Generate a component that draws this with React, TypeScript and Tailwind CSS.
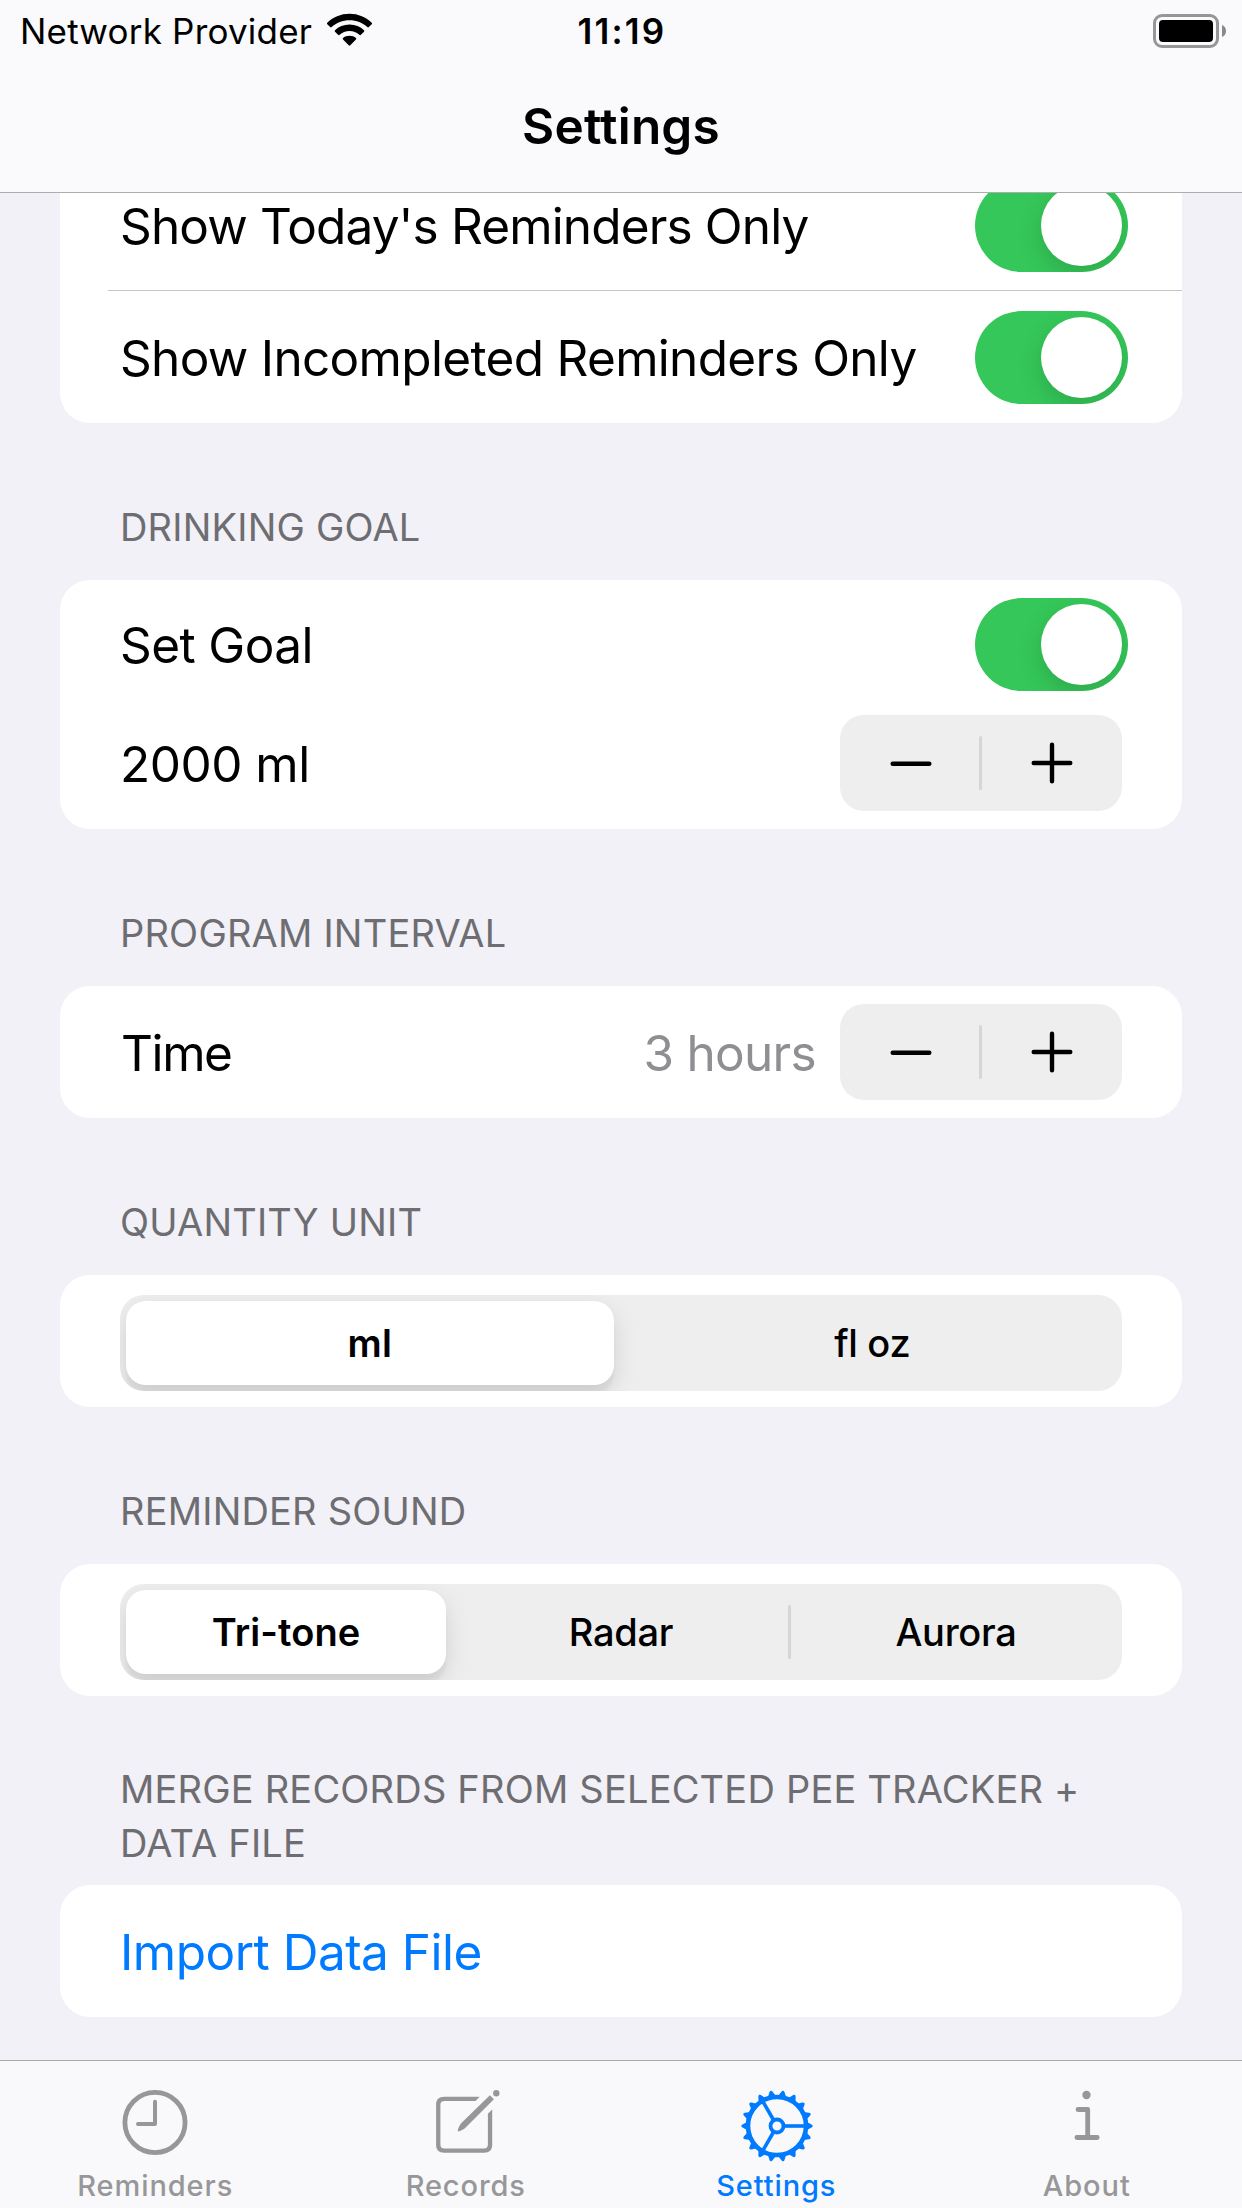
import React, { useState } from 'react';

interface ToggleProps {
  checked: boolean;
  onChange: (checked: boolean) => void;
}

const Toggle: React.FC<ToggleProps> = ({ checked, onChange }) => (
  <button
    type="button"
    role="switch"
    aria-checked={checked}
    onClick={() => onChange(!checked)}
    className={`flex h-[93px] w-[153px] shrink-0 items-center overflow-hidden rounded-full px-1.5 ${
      checked ? 'justify-end bg-[#35c759]' : 'justify-start bg-[#e9e9ea]'
    }`}
  >
    <span className="size-[81px] rounded-full bg-white shadow-[0_9px_24px_rgba(0,0,0,0.15)]" />
  </button>
);

interface StepperProps {
  onStep: (direction: number) => void;
}

const Stepper: React.FC<StepperProps> = ({ onStep }) => (
  <div className="flex h-24 w-[282px] shrink-0 items-center rounded-[24px] bg-[#eeeeee]">
    <button type="button" onClick={() => onStep(-1)} className="flex h-full w-[139px] items-center justify-center pl-0.5">
      <svg width="42" height="42" viewBox="0 0 42 42" fill="none" stroke="#000" strokeWidth="4.4" strokeLinecap="round">
        <path d="M2.7 21.7H39.3" />
      </svg>
    </button>
    <span className="h-[54px] w-[3px] rounded-full bg-[#d6d6d6]" />
    <button type="button" onClick={() => onStep(1)} className="flex h-full flex-1 items-center justify-center">
      <svg width="42" height="42" viewBox="0 0 42 42" fill="none" stroke="#000" strokeWidth="4.4" strokeLinecap="round">
        <path d="M2.7 21H39.3M21 2.7V39.3" />
      </svg>
    </button>
  </div>
);

interface SegmentedProps {
  options: string[];
  value: string;
  onChange: (value: string) => void;
}

const Segmented: React.FC<SegmentedProps> = ({ options, value, onChange }) => {
  const selected = options.indexOf(value);
  return (
    <div className="flex h-24 w-full items-center overflow-hidden rounded-[24px] bg-[#eeeeee]">
      {options.map((option, i) => (
        <React.Fragment key={option}>
          {i > 0 && (
            <span
              className={`-ml-0.5 -mr-px h-[54px] w-[3px] shrink-0 rounded-full ${
                i === selected || i === selected + 1 ? 'bg-transparent' : 'bg-[#d6d6d6]'
              }`}
            />
          )}
          <div className="flex min-w-0 flex-1 basis-0 pl-1.5 pr-[9px] last:pr-1.5">
            <button
              type="button"
              onClick={() => onChange(option)}
              className={`h-[84px] flex-1 text-[38px] ${
                i === selected
                  ? 'rounded-[20px] bg-white font-semibold tracking-[0.1px] shadow-[0_9px_24px_rgba(0,0,0,0.12),0_9px_3px_rgba(0,0,0,0.04)]'
                  : 'font-medium tracking-[-0.3px]'
              }`}
            >
              {option}
            </button>
          </div>
        </React.Fragment>
      ))}
    </div>
  );
};

const SectionHeader: React.FC<{ children: React.ReactNode; tall?: boolean }> = ({ children, tall }) => (
  <h2
    className={`flex items-end px-[60px] text-[38px] leading-[54px] tracking-[0.2px] text-[#6d6d72] ${
      tall ? 'h-[189px] pb-[15px]' : 'h-[157px] pb-[26px]'
    }`}
  >
    {children}
  </h2>
);

const Card: React.FC<{ children: React.ReactNode; className?: string }> = ({ children, className = '' }) => (
  <div className={`overflow-hidden rounded-[30px] bg-white ${className}`}>{children}</div>
);

const WifiIcon = () => (
  <svg className="mb-0.5" width="47" height="34" viewBox="0 0 48 34" fill="#000">
    <path d="M24 0.3C33 0.3 41 3.8 46.7 9.5C47.2 10 47.2 10.6 46.7 11.1L43.8 14C43.3 14.5 42.7 14.5 42.2 14C37.5 9.6 31 7 24 7C17 7 10.5 9.6 5.8 14C5.3 14.5 4.7 14.5 4.2 14L1.3 11.1C0.8 10.6 0.8 10 1.3 9.5C7 3.8 15 0.3 24 0.3Z" />
    <path d="M24 11.3C29.9 11.3 35.1 13.5 38.8 17.2C39.3 17.7 39.3 18.3 38.8 18.8L35.7 21.9C35.2 22.4 34.6 22.4 34.1 21.9C31.4 19.5 27.9 18 24 18C20.1 18 16.6 19.5 13.9 21.9C13.4 22.4 12.8 22.4 12.3 21.9L9.2 18.8C8.7 18.3 8.7 17.7 9.2 17.2C12.9 13.5 18.1 11.3 24 11.3Z" />
    <path d="M24 22.8C26.6 22.8 29 23.7 30.6 25.1C31.1 25.6 31.1 26.2 30.6 26.7L24.8 32.6C24.3 33.1 23.7 33.1 23.2 32.6L17.4 26.7C16.9 26.2 16.9 25.6 17.4 25.1C19 23.7 21.4 22.8 24 22.8Z" />
  </svg>
);

const BatteryIcon = () => (
  <svg width="74" height="34" viewBox="0 0 74 34">
    <rect x="1.5" y="1.5" width="63" height="31" rx="7.5" fill="none" stroke="#969698" strokeWidth="3" />
    <rect x="6" y="6" width="54" height="22" rx="4" fill="#000" />
    <path d="M69 11C71.6 12 73 14.3 73 17C73 19.7 71.6 22 69 23Z" fill="#8a8a8c" />
  </svg>
);

const ClockIcon = () => (
  <svg width="72" height="72" viewBox="0 0 72 72" fill="none" stroke="currentColor">
    <circle cx="36" cy="36.5" r="30.1" strokeWidth="4.8" />
    <path d="M36 15.8V38H19" strokeWidth="4" strokeLinecap="round" strokeLinejoin="round" />
  </svg>
);

const ComposeIcon = () => (
  <svg width="72" height="72" viewBox="0 0 72 72" fill="none">
    <path
      d="M49.6 10.7L45.6 14.9H14.5C11.5 14.9 10.4 16 10.4 19V58.3C10.4 61.3 11.5 62.4 14.5 62.4H53.8C56.8 62.4 57.9 61.3 57.9 58.3V27.8L62.2 23.4V58.7C62.2 64 59.5 66.7 54.2 66.7H14.1C8.8 66.7 6.1 64 6.1 58.7V18.7C6.1 13.4 8.8 10.7 14.1 10.7Z"
      fill="currentColor"
    />
    <path d="M27.6 45.6C28.2 42.2 29.3 39.2 31.9 36.6L59.9 9.3L63.9 13.3L36.2 41C33.8 43.4 30.9 45 27.6 45.6Z" fill="currentColor" />
    <circle cx="66.3" cy="7.3" r="3.2" fill="currentColor" />
  </svg>
);

const TEETH = Array.from({ length: 18 }, (_, i) => i * 20);
const SPOKES = [0, 120, 240];

const GearIcon = () => (
  <svg className="ml-px" width="72" height="72" viewBox="0 0 72 72" fill="none" stroke="currentColor">
    <circle cx="36" cy="36" r="29" strokeWidth="4.6" />
    <circle cx="36" cy="36" r="6.5" strokeWidth="3.8" />
    {SPOKES.map((angle) => (
      <path key={angle} d="M43.5 36H65" strokeWidth="3.6" transform={`rotate(${angle} 36 36)`} />
    ))}
    {TEETH.map((angle) => (
      <path
        key={angle}
        d="M66 32L70.5 34.4C72.2 35.2 72.2 36.8 70.5 37.6L66 40Z"
        fill="currentColor"
        stroke="none"
        transform={`rotate(${angle} 36 36)`}
      />
    ))}
  </svg>
);

const InfoIcon = () => (
  <svg width="72" height="72" viewBox="0 0 72 72" fill="none" stroke="currentColor" strokeWidth="4.8" strokeLinecap="round" strokeLinejoin="round">
    <circle cx="35.5" cy="9" r="4.2" fill="currentColor" stroke="none" />
    <path d="M27 23.5H36.7V51.5M25.9 51.5H46.2" />
  </svg>
);

const TABS = [
  { label: 'Reminders', icon: <ClockIcon />, offset: 'mt-[25px]' },
  { label: 'Records', icon: <ComposeIcon />, offset: 'mt-[25px]' },
  { label: 'Settings', icon: <GearIcon />, offset: 'mt-[29px]' },
  { label: 'About', icon: <InfoIcon />, offset: 'mt-[25px]' },
];

export default function App() {
  const [todayOnly, setTodayOnly] = useState(true);
  const [incompleteOnly, setIncompleteOnly] = useState(true);
  const [goalEnabled, setGoalEnabled] = useState(true);
  const [goal, setGoal] = useState(2000);
  const [interval, setIntervalHours] = useState(3);
  const [unit, setUnit] = useState('ml');
  const [sound, setSound] = useState('Tri-tone');
  const [tab, setTab] = useState('Settings');

  return (
    <div className="flex h-[2208px] w-[1242px] flex-col overflow-hidden bg-[#f2f1f7] font-[Inter,sans-serif] text-[49.5px] leading-none text-black">
      <header className="h-[193px] shrink-0 border-b border-[#adadb0] bg-[#fafafc]">
        {/* Status bar */}
        <div className="grid h-[62px] grid-cols-3 items-center pl-5 pr-[15px] text-[35px]">
          <div className="flex items-center gap-3.5 whitespace-nowrap">
            <span className="tracking-[0.2px]">Network Provider</span>
            <WifiIcon />
          </div>
          <span className="pr-[3px] text-center font-semibold tracking-[2.2px]">11:19</span>
          <div className="flex justify-end pb-px">
            <BatteryIcon />
          </div>
        </div>
        <h1 className="flex h-[130px] items-center justify-center font-semibold tracking-[0.2px]">Settings</h1>
      </header>

      <main className="min-h-0 flex-1 overflow-hidden px-[60px] tracking-[-0.6px]">
        <Card className="-mt-[34px]">
          <div className="ml-12 flex h-[132px] items-center justify-between border-b border-[#c6c6c8] pl-3 pr-[54px] pt-px">
            <span className="pt-[3px] tracking-[-0.86px]">Show Today's Reminders Only</span>
            <Toggle checked={todayOnly} onChange={setTodayOnly} />
          </div>
          <div className="flex h-[132px] items-center justify-between pl-[60px] pr-[54px] pt-px">
            <span className="pt-0.5 tracking-[-0.68px]">Show Incompleted Reminders Only</span>
            <Toggle checked={incompleteOnly} onChange={setIncompleteOnly} />
          </div>
        </Card>

        <SectionHeader>DRINKING GOAL</SectionHeader>
        <Card className="h-[249px] pl-[60px]">
          <div className="flex h-[129px] items-center justify-between pr-[54px]">
            <span className="pt-0.5">Set Goal</span>
            <Toggle checked={goalEnabled} onChange={setGoalEnabled} />
          </div>
          <div className="flex h-[108px] items-center justify-between pr-[60px]">
            <span className="pt-[3px] tracking-[-0.5px]">{goal} ml</span>
            <Stepper onStep={(d) => setGoal(Math.max(0, goal + d * 100))} />
          </div>
        </Card>

        <SectionHeader>PROGRAM INTERVAL</SectionHeader>
        <Card className="flex h-[132px] items-center px-[60px]">
          <span className="flex-1 pl-px pt-[3px] tracking-[-1.4px]">Time</span>
          <span className="mr-6 pt-[3px] tracking-[-0.7px] text-[#8e8e93]">{interval} hours</span>
          <Stepper onStep={(d) => setIntervalHours(Math.max(1, interval + d))} />
        </Card>

        <SectionHeader>QUANTITY UNIT</SectionHeader>
        <Card className="h-[132px] px-[60px] pt-5">
          <Segmented options={['ml', 'fl oz']} value={unit} onChange={setUnit} />
        </Card>

        <SectionHeader>REMINDER SOUND</SectionHeader>
        <Card className="h-[132px] px-[60px] pt-5">
          <Segmented options={['Tri-tone', 'Radar', 'Aurora']} value={sound} onChange={setSound} />
        </Card>

        <SectionHeader tall>MERGE RECORDS FROM SELECTED PEE TRACKER + DATA FILE</SectionHeader>
        <Card className="flex h-[132px] items-center px-[60px] pt-1">
          <button type="button" className="tracking-[-0.5px] text-[#007aff]">Import Data File</button>
        </Card>
      </main>

      <nav className="flex h-[148px] shrink-0 border-t border-[#a9a9ad] bg-[#f9f9fb]">
        {TABS.map(({ label, icon, offset }) => (
          <button
            key={label}
            type="button"
            onClick={() => setTab(label)}
            className={`flex flex-1 flex-col items-center ${tab === label ? 'text-[#007aff]' : 'text-[#979799]'}`}
          >
            <span className={`h-[72px] ${offset}`}>{icon}</span>
            <span className="mt-auto pb-[7px] text-[29px] font-medium leading-[30px] tracking-[0.9px]">{label}</span>
          </button>
        ))}
      </nav>
    </div>
  );
}
